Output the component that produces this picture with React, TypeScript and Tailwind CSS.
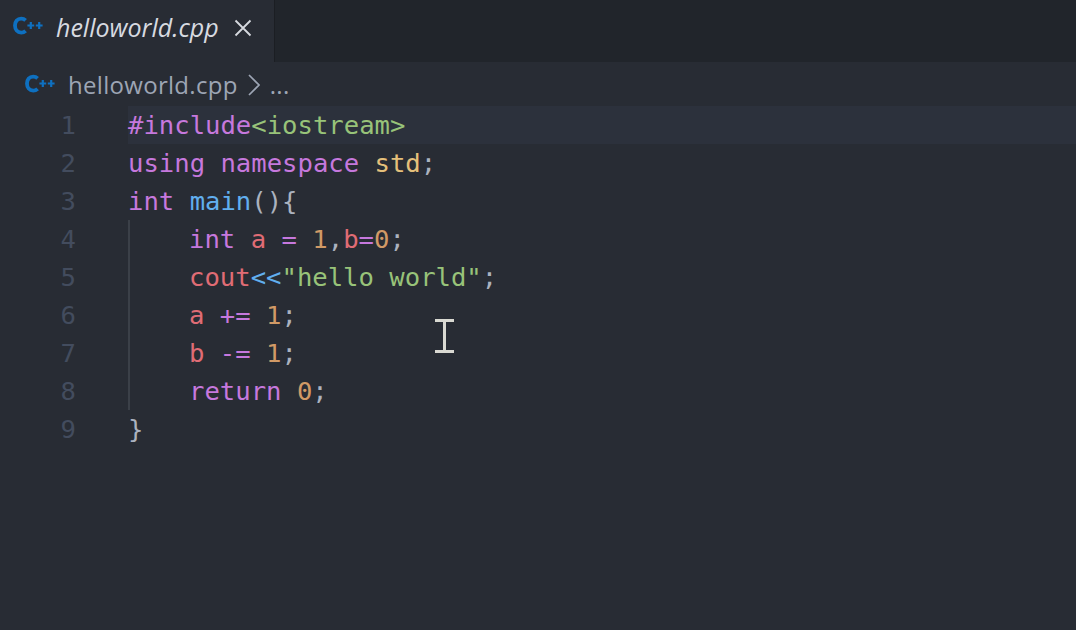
import React from "react";

const PURPLE = "text-[#c678dd]";
const RED = "text-[#e06c75]";
const GREEN = "text-[#98c379]";
const ORANGE = "text-[#d19a66]";
const YELLOW = "text-[#e5c07b]";
const BLUE = "text-[#61afef]";
const PLAIN = "text-[#abb2bf]";

type Token = [string, string];

// one entry per editor line
const LINES: { indent?: boolean; tokens: Token[] }[] = [
  { tokens: [[PURPLE, "#include"], [GREEN, "<iostream>"]] },
  { tokens: [[PURPLE, "using namespace "], [YELLOW, "std"], [PLAIN, ";"]] },
  { tokens: [[PURPLE, "int "], [BLUE, "main"], [PLAIN, "(){"]] },
  {
    indent: true,
    tokens: [
      [PURPLE, "int "],
      [RED, "a "],
      [PURPLE, "= "],
      [ORANGE, "1"],
      [PLAIN, ","],
      [RED, "b"],
      [PURPLE, "="],
      [ORANGE, "0"],
      [PLAIN, ";"],
    ],
  },
  {
    indent: true,
    tokens: [[RED, "cout"], [BLUE, "<<"], [GREEN, '"hello world"'], [PLAIN, ";"]],
  },
  { indent: true, tokens: [[RED, "a "], [PURPLE, "+= "], [ORANGE, "1"], [PLAIN, ";"]] },
  { indent: true, tokens: [[RED, "b "], [PURPLE, "-= "], [ORANGE, "1"], [PLAIN, ";"]] },
  { indent: true, tokens: [[PURPLE, "return "], [ORANGE, "0"], [PLAIN, ";"]] },
  { tokens: [[PLAIN, "}"]] },
];

function CppIcon({ className }: { className?: string }) {
  return (
    <svg width="32" height="20" viewBox="0 0 32 20" fill="none" className={className} aria-hidden>
      <path
        d="M13.6 4.4C12.4 3.2 10.9 2.6 9.2 2.6 5.4 2.6 3 5.6 3 9.6s2.4 7 6.2 7c1.7 0 3.2-.6 4.4-1.8"
        stroke="#0e70c0"
        strokeWidth="3.8"
      />
      <path d="M15.4 9.5h6.8M18.8 6.1v6.8M23.8 9.5h6.8M27.2 6.1v6.8" stroke="#0e70c0" strokeWidth="2.2" />
    </svg>
  );
}

function IBeam() {
  return (
    <svg
      width="20"
      height="34"
      viewBox="0 0 20 34"
      className="absolute left-[435px] top-[319px]"
      aria-hidden
    >
      <path
        d="M0 1.5h19M9.5 1.5v31M0 32.5h19"
        stroke="#d9d9d2"
        strokeWidth="3"
        fill="none"
      />
    </svg>
  );
}

export default function App() {
  return (
    <div className="relative flex h-[630px] w-[1076px] flex-col overflow-hidden bg-[#282c34] font-['Open_Sans',sans-serif]">
      {/* Tab bar */}
      <div className="flex h-[62px] shrink-0 bg-[#21252b]">
        <div className="flex w-[275px] items-center border-r border-[#1b1e23] bg-[#282c34] pb-[6px] pl-[12px]">
          <CppIcon className="-mt-[4px]" />
          <span className="ml-[12px] text-[25px] italic text-[#d7dae0]">helloworld.cpp</span>
          <svg width="18" height="18" viewBox="0 0 18 18" className="ml-[15px]" aria-hidden>
            <path d="M1.5 1.5l15 15M16.5 1.5l-15 15" stroke="#d7dae0" strokeWidth="1.8" />
          </svg>
        </div>
      </div>

      {/* Breadcrumbs */}
      <div className="flex h-[44px] shrink-0 items-center pl-[24px] pt-[2px] text-[24px] tracking-[0.3px] text-[#9da5b4]">
        <CppIcon className="-mt-[2px]" />
        <span className="ml-[12px]">helloworld.cpp</span>
        <svg width="13" height="22" viewBox="0 0 13 22" className="ml-[9px]" aria-hidden>
          <path d="M2 1l10 10-10 10" stroke="#9da5b4" strokeWidth="1.7" fill="none" />
        </svg>
        <span className="ml-[10px]">...</span>
      </div>

      {/* Code */}
      <div className="font-['DejaVu_Sans_Mono',monospace] text-[25.6px] leading-[38px]">
        {LINES.map((line, i) => (
          <div key={i} className="flex h-[38px]">
            <div className="w-[76px] shrink-0 text-right text-[#434c5e]">{i + 1}</div>
            <div
              className={`ml-[52px] grow whitespace-pre ${i === 0 ? "bg-[#2c313c]" : ""} ${
                line.indent ? "border-l-2 border-[#3b4048] pl-[59px]" : ""
              }`}
            >
              {line.tokens.map(([color, text], j) => (
                <span key={j} className={color}>
                  {text}
                </span>
              ))}
            </div>
          </div>
        ))}
      </div>

      <IBeam />
    </div>
  );
}
